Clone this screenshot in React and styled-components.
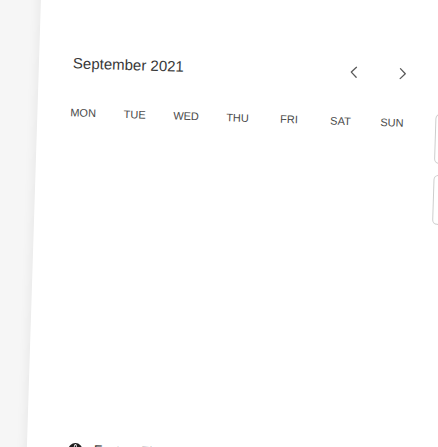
import styled, {createGlobalStyle} from "styled-components";

const GlobalStyle = createGlobalStyle`
  html, body {
    margin: 0;
    height: 100%;
    overflow: hidden;
    background: #f6f6f6;
  }
  body {
    font-family: "Liberation Sans", Arial, sans-serif;
  }
`;

const Stage = styled.div`
  width: 438px;
  height: 447px;
  display: flex;
  align-items: flex-start;
  padding-left: 34px;
  box-sizing: border-box;
  transform: rotate(1.8deg);
  transform-origin: 219px 223.5px;
`;

const Card = styled.div`
  margin-top: -40px;
  width: 700px;
  min-height: 580px;
  flex-shrink: 0;
  background: #fff;
  box-shadow: -3px 0 10px rgba(0, 0, 0, 0.05);
  display: flex;
`;

const CalendarPane = styled.section`
  width: 398px;
  flex-shrink: 0;
  box-sizing: border-box;
  padding: 98px 22px 0 34px;
`;

const Header = styled.div`
  height: 20px;
  display: flex;
  align-items: center;
  justify-content: space-between;
`;

const Title = styled.h2`
  margin: 0;
  font-size: 15px;
  line-height: 20px;
  font-weight: 400;
  color: #383838;
`;

const NavGroup = styled.div`
  display: flex;
  gap: 25px;
`;

const NavButton = styled.button`
  width: 24px;
  height: 24px;
  padding: 0;
  border: none;
  background: none;
  display: grid;
  place-items: center;
  color: #5a5a5a;
  cursor: pointer;
`;

const Weekdays = styled.div`
  margin: 32px 0 0 -14px;
  display: grid;
  grid-template-columns: repeat(7, 51.5px);
`;

const Weekday = styled.span`
  text-align: center;
  font-size: 11px;
  line-height: 14px;
  color: #4a4a4a;
  text-transform: uppercase;
`;

const Dates = styled.div`
  height: 300px;
`;

const Footer = styled.div`
  margin-top: 22px;
  padding-left: 7px;
  height: 16px;
  display: flex;
  align-items: center;
  gap: 11px;
`;

const Zone = styled.span`
  font-size: 13px;
  line-height: 16px;
  color: #333;
  white-space: nowrap;
`;

const SlotsPane = styled.section`
  padding-top: 147px;
  display: flex;
  flex-direction: column;
  gap: 11px;
`;

const Slot = styled.div`
  width: 220px;
  height: 50px;
  box-sizing: border-box;
  border: 1px solid #cdcdcd;
  border-radius: 5px;
`;

const Chevron = ({dir}) => (
  <svg width="8" height="12" viewBox="0 0 8 12" fill="none">
    <polyline
      points={dir === "left" ? "6.5,1 1.5,6 6.5,11" : "1.5,1 6.5,6 1.5,11"}
      stroke="currentColor"
      strokeWidth="1.3"
      strokeLinecap="round"
      strokeLinejoin="round"
    />
  </svg>
);

const Globe = () => (
  <svg width="15" height="15" viewBox="0 0 16 16">
    <circle cx="8" cy="8" r="7.5" fill="#1f1f1f"/>
    <path d="M8 1.5c-2 2-2 11 0 13M8 1.5c2 2 2 11 0 13M2 6h12M2 10h12"
          stroke="#fff" strokeWidth="1" fill="none"/>
  </svg>
);

const days = ["Mon", "Tue", "Wed", "Thu", "Fri", "Sat", "Sun"];

const App = () => {
  return (
    <>
      <GlobalStyle/>
      <Stage>
        <Card>
          <CalendarPane>
            <Header>
              <Title>September 2021</Title>
              <NavGroup>
                <NavButton aria-label="Previous month"><Chevron dir="left"/></NavButton>
                <NavButton aria-label="Next month"><Chevron dir="right"/></NavButton>
              </NavGroup>
            </Header>
            <Weekdays>
              {days.map(d => <Weekday key={d}>{d}</Weekday>)}
            </Weekdays>
            <Dates/>
            <Footer>
              <Globe/>
              <Zone>Eastern Time (US &amp; Canada)</Zone>
            </Footer>
          </CalendarPane>
          <SlotsPane>
            <Slot/>
            <Slot/>
          </SlotsPane>
        </Card>
      </Stage>
    </>
  );
};

export default App;
